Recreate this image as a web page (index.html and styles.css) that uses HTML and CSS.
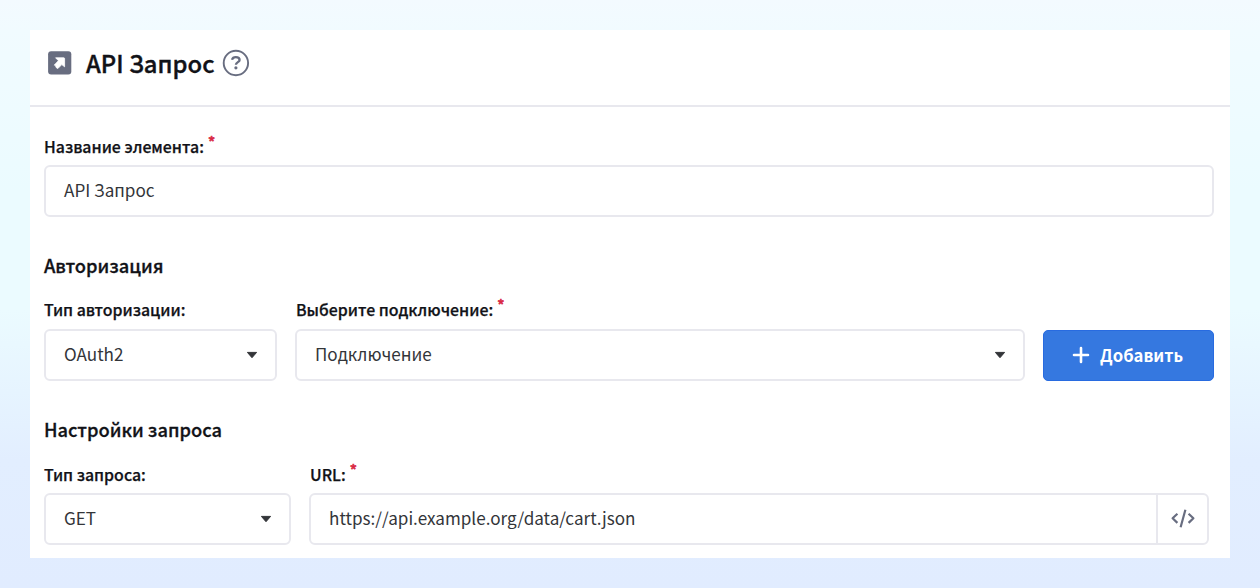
FILE: index.html
```html
<!DOCTYPE html>
<html lang="ru">
<head>
<meta charset="utf-8">
<title>API Запрос</title>
<link rel="stylesheet" href="styles.css">
</head>
<body>
<main class="panel">
  <header class="header">
    <svg class="header-icon" width="24" height="24" viewBox="0 0 24 24"><rect x=".1" y=".3" width="23.2" height="23.2" rx="3" fill="#686d80"/><path d="M7.6 6.8h8.2c.5 0 .8.3.8.8v8.2l-2.8-2.2-4 4-1.5-.9-.6-1.6-1.4-1 4.1-4.4z" fill="#fff" stroke="#fff" stroke-width=".8" stroke-linejoin="round"/></svg>
    <h1 class="title">API Запрос</h1>
    <svg class="help" width="28" height="28" viewBox="0 0 28 28" fill="none" stroke="#686d80"><circle cx="13.9" cy="14" r="12.2" stroke-width="1.9"/><path d="M10 10.8c.5-1.8 1.8-2.6 3.8-2.6 2.2 0 3.8 1 3.8 2.7 0 2.2-3.7 2.3-3.7 4.9" stroke-width="2.3"/><circle cx="13.9" cy="18.8" r="1.6" fill="#686d80" stroke="none"/></svg>
  </header>
  <form class="form">
    <div class="field">
      <div class="label"><span>Название элемента:</span><span class="req">*</span></div>
      <div class="input"><span>API Запрос</span></div>
    </div>
    <h2 class="section auth">Авторизация</h2>
    <div class="row auth-row">
      <div class="field">
        <div class="label"><span>Тип авторизации:</span></div>
        <div class="input select"><span>OAuth2</span><svg class="caret" width="12" height="8" viewBox="0 0 12 8"><path d="M1.4 1.4h9.2L6 6.7z" fill="#333539" stroke="#333539" stroke-linejoin="round"/></svg></div>
      </div>
      <div class="field">
        <div class="label choose"><span>Выберите подключение:</span><span class="req">*</span></div>
        <div class="input select"><span>Подключение</span><svg class="caret" width="12" height="8" viewBox="0 0 12 8"><path d="M1.4 1.4h9.2L6 6.7z" fill="#333539" stroke="#333539" stroke-linejoin="round"/></svg></div>
      </div>
      <button class="add" type="button"><svg width="18" height="18" viewBox="0 0 18 18"><path d="M9 2v14M2 9h14" stroke="#fff" stroke-width="2.6" stroke-linecap="round"/></svg><span>Добавить</span></button>
    </div>
    <h2 class="section request">Настройки запроса</h2>
    <div class="row request-row">
      <div class="field">
        <div class="label"><span>Тип запроса:</span></div>
        <div class="input select"><span>GET</span><svg class="caret" width="12" height="8" viewBox="0 0 12 8"><path d="M1.4 1.4h9.2L6 6.7z" fill="#333539" stroke="#333539" stroke-linejoin="round"/></svg></div>
      </div>
      <div class="field">
        <div class="label url-label"><span>URL:</span><span class="req">*</span></div>
        <div class="input url"><span>https://api.example.org/data/cart.json</span><span class="code"><svg width="26" height="20" viewBox="0 0 26 20" fill="none" stroke="#686d80" stroke-width="2.2" stroke-linejoin="round"><path d="M7.4 4.7 2.6 9.3l4.8 4.6M18.6 4.7l4.8 4.6-4.8 4.6M15.4.8l-4.8 17.4"/></svg></span></div>
      </div>
    </div>
  </form>
</main>
</body>
</html>
```
FILE: styles.css
```css
* { box-sizing: border-box; }
body {
  margin: 0;
  height: 588px;
  overflow: hidden;
  padding: 30px;
  background: linear-gradient(180deg, #f3faff 0, #f1fbff 30px, #ebfbff 190px, #ebfbff 310px, #e2eeff 460px, #e1ecff 588px);
  font-family: "Noto Sans CJK SC", "Open Sans", sans-serif;
  color: #111217;
}
.panel { height: 528px; background: #fff; }
.header {
  height: 77px;
  border-bottom: 2px solid #e8e8ee;
  display: flex;
  align-items: center;
  padding: 0 18px 9px;
}
.title { margin: 0 7px 0 14px; width: 129px; font-size: 23.8px; line-height: 36px; font-weight: 500; white-space: nowrap; -webkit-text-stroke: .35px; }
.form { padding: 27px 16px 0 14px; }
.label { height: 31px; display: flex; font-size: 15.9px; line-height: 26px; font-weight: 500; white-space: nowrap; -webkit-text-stroke: .25px; }
.auth-row .label { height: 32px; }
.choose { padding-left: 1px; }
.req { color: #d92945; font-size: 15px; line-height: 16px; margin-left: 4px; -webkit-text-stroke: .6px; }
.input {
  height: 52px;
  border: 2px solid #e8e8ee;
  border-radius: 6px;
  padding: 0 17px 2px 18px;
  display: flex;
  align-items: center;
  justify-content: space-between;
  font-size: 17.1px;
  line-height: 24px;
  color: #333539;
  white-space: nowrap;
}
.caret { position: relative; top: 1px; }
.section { margin: 0; font-size: 18.3px; line-height: 28px; font-weight: 500; -webkit-text-stroke: .3px; }
.auth { margin-top: 34px; }
.request { margin-top: 34px; }
.row { display: grid; margin-top: 18px; }
.request-row { margin-top: 19px; }
.auth-row { grid-template-columns: 233px 730px 171px; column-gap: 18px; align-items: end; }
.request-row { grid-template-columns: 247px 900px; column-gap: 18px; }
.add {
  height: 51px;
  border: 1px solid #286be0;
  border-radius: 5px;
  background: #3578e0;
  color: #fff;
  font: 700 16.7px/24px "Noto Sans CJK SC", sans-serif;
  display: flex;
  align-items: center;
  justify-content: center;
  gap: 10px;
  padding: 0 2px 2px 0;
}
.url-label { padding-left: 1px; }
.url { padding-right: 0; padding-bottom: 0; }
.url > span:first-child { padding-bottom: 2px; }
.code { width: 51px; height: 48px; border-left: 2px solid #e8e8ee; display: grid; place-items: center; }
```
